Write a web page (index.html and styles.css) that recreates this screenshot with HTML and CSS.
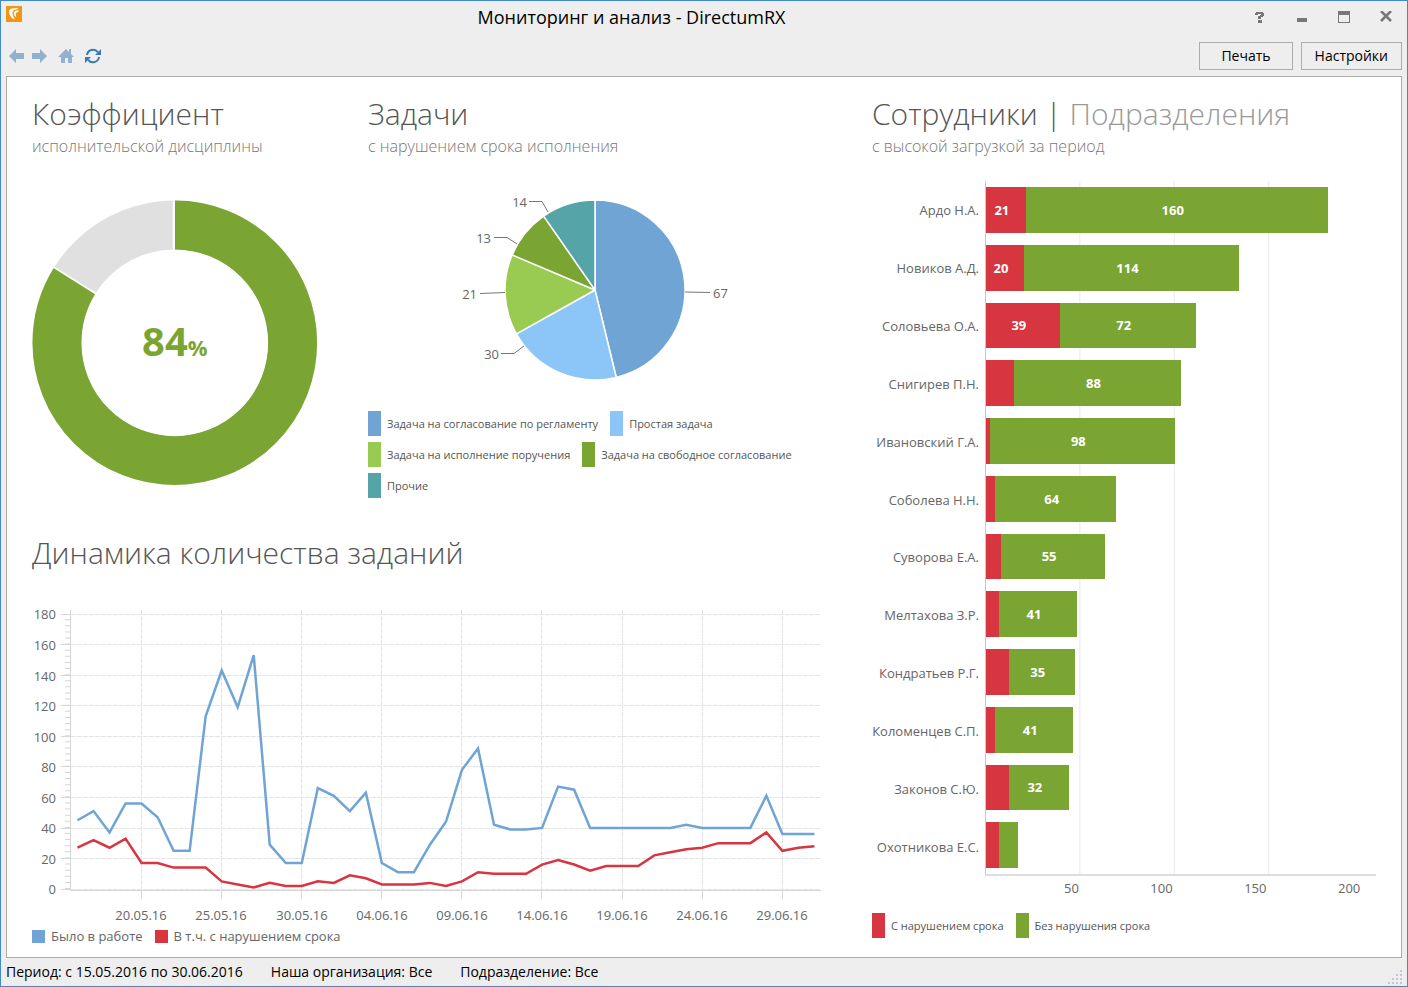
FILE: index.html
```html
<!DOCTYPE html>
<html lang="ru">
<head>
<meta charset="utf-8">
<title>Мониторинг и анализ - DirectumRX</title>
<link rel="stylesheet" href="styles.css">
</head>
<body>
<div class="window">
  <header class="titlebar">
    <svg class="app-icon" viewBox="0 0 16 16" aria-hidden="true">
      <rect width="16" height="16" fill="#ee9616"/>
      <path d="M2.800 4.500L5.500 2.500L12 2L11.500 3.200L8 4L6.300 6.300L6.800 9.500L9 13.800L5.500 11.800L3.500 8.500Z" fill="#fff"/>
      <path d="M7.600 6.600L9.500 4.800L13 4.400L12.500 5.700L10.500 6.500L9.600 8L10.300 11.200L8.200 9.500Z" fill="#fff"/>
    </svg>
    <h1 class="title">Мониторинг и анализ - DirectumRX</h1>
    <div class="window-buttons">
      <button class="win-btn" type="button" aria-label="Справка"><svg viewBox="0 0 12 12"><path d="M1 4V2H2V1H9V2H10V5H9V6H7V8H4V5H6V4H7V3H4V4Z M4 9H8V12H4Z" fill="#777"/></svg></button>
      <button class="win-btn" type="button" aria-label="Свернуть"><svg viewBox="0 0 12 12"><path d="M1 7h10v4H1z" fill="#777"/></svg></button>
      <button class="win-btn" type="button" aria-label="Развернуть"><svg viewBox="0 0 12 12"><path d="M0 0h12v12H0zM1 4v7h10V4z" fill="#777" fill-rule="evenodd"/></svg></button>
      <button class="win-btn" type="button" aria-label="Закрыть"><svg viewBox="0 0 12 12"><path d="M1 0l10 10M11 0L1 10" stroke="#777" stroke-width="2.600"/></svg></button>
    </div>
  </header>

  <div class="toolbar">
    <nav class="nav">
      <button class="nav-btn" type="button" aria-label="Назад"><svg viewBox="0 0 16 16"><path d="M1 8l7-7v4h8v6H8v4z" fill="#91b1ce"/></svg></button>
      <button class="nav-btn nav-forward" type="button" aria-label="Вперёд"><svg viewBox="0 0 16 16"><path d="M16 8L9 1v4H1v6h8v4z" fill="#91b1ce"/></svg></button>
      <button class="nav-btn nav-home" type="button" aria-label="Домой"><svg viewBox="0 0 16 16"><path d="M8 1l3 3V1h2v5l3 3h-2v6h-4v-5H7v5H3V9H0z" fill="#91b1ce"/></svg></button>
      <button class="nav-btn" type="button" aria-label="Обновить"><svg viewBox="0 0 16 16"><path d="M2 7a6 6 0 0 1 10.800-2.800M14 9a6 6 0 0 1-10.800 2.800" fill="none" stroke="#3a78b0" stroke-width="2"/><path d="M16 1v6h-6zM0 15V9h6z" fill="#3a78b0"/></svg></button>
    </nav>
    <div class="actions">
      <button class="action print" type="button">Печать</button>
      <button class="action" type="button">Настройки</button>
    </div>
  </div>

  <main class="panel">
    <section class="ratio">
      <h2 class="heading">Коэффициент</h2>
      <p class="subheading">исполнительской дисциплины</p>
      <svg class="donut" viewBox="0 0 286 286" role="img" aria-label="84%">
        <g fill="none" stroke-width="49" transform="rotate(-90 143 143)">
          <circle cx="143" cy="143" r="118" stroke="#e0e0e0"/>
          <circle cx="143" cy="143" r="118" stroke="#7aa533" pathLength="100" stroke-dasharray="84 16"/>
        </g>
        <path d="M142 0V143L20 66" fill="none" stroke="#fff" stroke-width="2"/>
        <circle cx="143" cy="143" r="93" fill="#fff"/>
        <text class="donut-value" x="143" y="156" text-anchor="middle">84<tspan class="donut-unit">%</tspan></text>
      </svg>
    </section>

    <section class="tasks">
      <h2 class="heading">Задачи</h2>
      <p class="subheading">с нарушением срока исполнения</p>
      <svg class="pie" viewBox="0 0 504 231" role="img" aria-label="Задачи с нарушением срока">
        <g transform="translate(227 110)">
          <g stroke="#fff" stroke-width="1.500" stroke-linejoin="round">
            <path d="M0 0V-90A90 90 0 0 1 21.260 87.450Z" fill="#6fa4d5"/>
            <path d="M0 0L21.260 87.450A90 90 0 0 1-78.590 43.870Z" fill="#8cc6f8"/>
            <path d="M0 0L-78.590 43.870A90 90 0 0 1-82.870-35.120Z" fill="#99cb52"/>
            <path d="M0 0L-82.870-35.120A90 90 0 0 1-51.320-73.940Z" fill="#7aa533"/>
            <path d="M0 0L-51.320-73.940A90 90 0 0 1 0-90Z" fill="#54a4a8"/>
          </g>
          <path d="M90 2L115 2.500M-71 56L-81 63.500H-94M-90 2.500L-115 3.500M-78-46L-88-52.500H-101M-47-78L-53-88.500H-66" fill="none" stroke="#777"/>
          <g class="chart-text">
            <text x="118" y="8">67</text>
            <text x="-96" y="69" text-anchor="end">30</text>
            <text x="-118" y="9" text-anchor="end">21</text>
            <text x="-104" y="-47" text-anchor="end">13</text>
            <text x="-68" y="-83" text-anchor="end">14</text>
          </g>
        </g>
      </svg>
      <ul class="legend task-legend">
        <li><i class="swatch blue"></i>Задача на согласование по регламенту</li>
        <li><i class="swatch sky"></i>Простая задача</li>
        <li><i class="swatch lime"></i>Задача на исполнение поручения</li>
        <li><i class="swatch green"></i>Задача на свободное согласование</li>
        <li><i class="swatch teal"></i>Прочие</li>
      </ul>
    </section>

    <section class="dynamics">
      <h2 class="heading">Динамика количества заданий</h2>
      <svg class="lines" viewBox="0 0 840 320" role="img" aria-label="Динамика количества заданий">
        <path d="M39 9.500H789M39 39.500H789M39 70.500H789M39 100.500H789M39 131.500H789M39 161.500H789M39 192.500H789M39 223.500H789M39 253.500H789M39 284.500H789M109.500 5V285M189.500 5V285M269.500 5V285M349.500 5V285M429.500 5V285M509.500 5V285M590.500 5V285M670.500 5V285M750.500 5V285" fill="none" stroke="#e4e4e4" stroke-dasharray="5 1"/>
        <path d="M35.500 284V9" stroke="#d6d6d6" stroke-width="5" stroke-dasharray="1 5.110"/>
        <path d="M38.500 5V285.500H789M29 9.500H38M29 39.500H38M29 70.500H38M29 100.500H38M29 131.500H38M29 161.500H38M29 192.500H38M29 223.500H38M29 253.500H38M29 284.500H38M109.500 286V294M189.500 286V294M269.500 286V294M349.500 286V294M429.500 286V294M509.500 286V294M590.500 286V294M670.500 286V294M750.500 286V294" fill="none" stroke="#d6d6d6"/>
        <g class="chart-text" text-anchor="end">
          <text x="24" y="14">180</text><text x="24" y="45">160</text><text x="24" y="76">140</text><text x="24" y="106">120</text><text x="24" y="137">100</text><text x="24" y="167">80</text><text x="24" y="198">60</text><text x="24" y="228">40</text><text x="24" y="259">20</text><text x="24" y="289">0</text>
        </g>
        <g class="chart-text" text-anchor="middle">
          <text x="109" y="315">20.05.16</text><text x="189" y="315">25.05.16</text><text x="270" y="315">30.05.16</text><text x="350" y="315">04.06.16</text><text x="430" y="315">09.06.16</text><text x="510" y="315">14.06.16</text><text x="590" y="315">19.06.16</text><text x="670" y="315">24.06.16</text><text x="750" y="315">29.06.16</text>
        </g>
        <g class="series" transform="translate(45.500 284) scale(16.020 -1.528)">
          <polyline stroke="#6fa4d5" points="0,45 1,51 2,37 3,56 4,56 5,47 6,25 7,25 8,113 9,143 10,119 11,153 12,29 13,17 14,17 15,66 16,61 17,51 18,63 19,17 20,11 21,11 22,29 23,44 24,78 25,92 26,42 27,39 28,39 29,40 30,67 31,65 32,40 37,40 38,42 39,40 42,40 43,61 44,36 46,36"/>
          <polyline stroke="#d7353f" points="0,27 1,32 2,27 3,33 4,17 5,17 6,14 8,14 9,5 10,3 11,1 12,4 13,2 14,2 15,5 16,4 17,9 18,7 19,3 21,3 22,4 23,2 24,5 25,11 26,10 28,10 29,16 30,19 31,16 32,12 33,15 35,15 36,22 37,24 38,26 39,27 40,30 42,30 43,37 44,25 45,27 46,28"/>
        </g>
      </svg>
      <ul class="legend line-legend">
        <li><i class="swatch blue"></i>Было в работе</li>
        <li><i class="swatch red"></i>В т.ч. с нарушением срока</li>
      </ul>
    </section>

    <section class="staff">
      <h2 class="heading">Сотрудники | <a class="other-tab" href="#">Подразделения</a></h2>
      <p class="subheading">с высокой загрузкой за период</p>
      <div class="bars">
        <div class="names">
          <span>Ардо Н.А.</span><span>Новиков А.Д.</span><span>Соловьева О.А.</span><span>Снигирев П.Н.</span><span>Ивановский Г.А.</span><span>Соболева Н.Н.</span><span>Суворова Е.А.</span><span>Мелтахова З.Р.</span><span>Кондратьев Р.Г.</span><span>Коломенцев С.П.</span><span>Законов С.Ю.</span><span>Охотникова Е.С.</span>
        </div>
        <div class="plot">
          <div class="bar"><b class="red" style="width:10.2%">21</b><b class="green" style="width:77.4%">160</b></div>
          <div class="bar"><b class="red" style="width:9.7%">20</b><b class="green" style="width:55.2%">114</b></div>
          <div class="bar"><b class="red" style="width:18.9%">39</b><b class="green" style="width:34.9%">72</b></div>
          <div class="bar"><b class="red" style="width:7.3%"></b><b class="green" style="width:42.6%">88</b></div>
          <div class="bar"><b class="red" style="width:1%"></b><b class="green" style="width:47.4%">98</b></div>
          <div class="bar"><b class="red" style="width:2.4%"></b><b class="green" style="width:31%">64</b></div>
          <div class="bar"><b class="red" style="width:3.9%"></b><b class="green" style="width:26.6%">55</b></div>
          <div class="bar"><b class="red" style="width:3.4%"></b><b class="green" style="width:19.9%">41</b></div>
          <div class="bar"><b class="red" style="width:5.8%"></b><b class="green" style="width:17%">35</b></div>
          <div class="bar"><b class="red" style="width:2.4%"></b><b class="green" style="width:19.9%">41</b></div>
          <div class="bar"><b class="red" style="width:5.8%"></b><b class="green" style="width:15.5%">32</b></div>
          <div class="bar"><b class="red" style="width:3.4%"></b><b class="green" style="width:4.9%"></b></div>
        </div>
        <div class="scale"><span>50</span><span>100</span><span>150</span><span>200</span></div>
      </div>
      <ul class="legend">
        <li><i class="swatch red"></i>С нарушением срока</li>
        <li><i class="swatch green"></i>Без нарушения срока</li>
      </ul>
    </section>
  </main>

  <footer class="status">
    <span>Период: с 15.05.2016 по 30.06.2016</span>
    <span>Наша организация: Все</span>
    <span>Подразделение: Все</span>
    <svg class="grip" viewBox="0 0 14 14" aria-hidden="true"><path d="M12 0h2v2h-2zM8 4h2v2H8zM12 4h2v2h-2zM4 8h2v2H4zM8 8h2v2H8zM12 8h2v2h-2zM0 12h2v2H0zM4 12h2v2H4zM8 12h2v2H8zM12 12h2v2h-2z" fill="#c4c6d6"/></svg>
  </footer>
</div>
</body>
</html>
```

FILE: styles.css
```css
* { box-sizing: border-box; }

body {
  margin: 0;
  font-family: "Open Sans", "Noto Sans", sans-serif;
  font-size: 14px;
  color: #000;
}

h1, h2, p, ul { margin: 0; padding: 0; font-weight: 400; }
ul { list-style: none; }
svg { display: block; }
button { font: inherit; color: inherit; margin: 0; padding: 0; background: none; border: 0; }

.window {
  min-height: 100vh;
  display: flex;
  flex-direction: column;
  padding: 0 5px;
  background: #eee;
  border: 1px solid #428bca;
}

.titlebar { display: flex; height: 36px; align-items: flex-start; }
.app-icon { width: 16px; height: 16px; margin-top: 5px; }
.title { flex: 1; font-size: 18px; line-height: 32px; text-align: center; }
.window-buttons { display: flex; gap: 30px; padding: 10px 10px 0 13px; }
.win-btn, .win-btn svg { width: 12px; height: 12px; }

.toolbar { display: flex; justify-content: space-between; height: 39px; }
.nav { display: flex; align-items: center; padding: 0 0 2px 2px; }
.nav-btn, .nav-btn svg { width: 16px; height: 16px; }
.nav-forward { margin-left: 7px; }
.nav-home { margin: 0 11px; }
.actions { display: flex; gap: 8px; padding-top: 5px; }
.action { height: 28px; padding: 0 13px; border: 1px solid #acacac; line-height: 26px; }
.print { padding: 0 21px; }

.panel {
  flex: 1;
  display: grid;
  grid-template-columns: 2fr 3fr 3fr;
  grid-template-rows: auto 1fr;
  padding: 15px 25px 10px;
  background: #fff;
  border: 1px solid #acacac;
}
.ratio, .tasks, .dynamics, .staff { min-width: 0; }
.dynamics { grid-column: 1 / 3; grid-row: 2; padding-top: 33px; }
.staff {
  grid-column: 3;
  grid-row: 1 / 3;
  display: flex;
  flex-direction: column;
  padding-bottom: 9px;
}

.heading { font-size: 30px; line-height: 44px; font-weight: 300; color: #555; }
.subheading { font-size: 16px; line-height: 20px; font-weight: 300; color: #777; }
.other-tab { color: #999; text-decoration: none; }

.donut { width: 85%; margin-top: 44px; }
.donut-value { font-size: 40px; font-weight: 700; fill: #7aa533; }
.donut-unit { font-size: 22px; }
.chart-text { font-size: 13px; fill: #666; }

.pie { width: 100%; margin-top: 24px; }

.legend { display: flex; flex-wrap: wrap; gap: 6px 12px; font-size: 11px; line-height: 25px; color: #555; }
.legend li { display: flex; align-items: center; gap: 6px; }
.swatch { width: 13px; height: 25px; }
.blue { background: #6fa4d5; }
.sky { background: #8cc6f8; }
.lime { background: #99cb52; }
.green { background: #7aa533; }
.teal { background: #54a4a8; }
.red { background: #d7353f; }
.task-legend { padding-right: 60px; }

.lines { width: 100%; margin-top: 30px; }
.series { fill: none; }
.series polyline { stroke-width: 2.5px; vector-effect: non-scaling-stroke; }
.line-legend { font-size: 13px; line-height: 22px; color: #666; }
.line-legend .swatch { height: 13px; }

.bars {
  flex: 1;
  display: grid;
  grid-template-columns: 113px 1fr;
  grid-template-rows: 1fr auto;
  margin-top: 25px;
}
.names, .plot { display: grid; grid-auto-rows: 1fr; }
.names { padding-right: 6px; text-align: right; font-size: 13px; color: #666; white-space: nowrap; }
.names span { align-self: center; }
.plot {
  border-left: 1px solid #c8c8c8;
  border-bottom: 2px solid #ddd;
  background:
    linear-gradient(#fff, #fff) right / 10% 100% no-repeat,
    linear-gradient(to right, transparent calc(100% - 1px), #e9e9e9 0) 0 0 / 24.2% 100% repeat-x;
}
.bar { display: flex; padding: 6px 0; }
.bar b { display: flex; align-items: center; justify-content: center; color: #fff; font-size: 13px; }
.bar b:not(:empty) { padding-right: 8px; }
.scale {
  grid-column: 2;
  display: grid;
  grid-template-columns: repeat(4, 24%);
  font-size: 13px;
  line-height: 24px;
  color: #666;
  text-align: right;
}
.staff .legend { margin-top: 13px; }

.status { display: flex; gap: 28px; height: 28px; line-height: 28px; }
.grip { width: 14px; height: 14px; margin: 12px 0 0 auto; }
```
